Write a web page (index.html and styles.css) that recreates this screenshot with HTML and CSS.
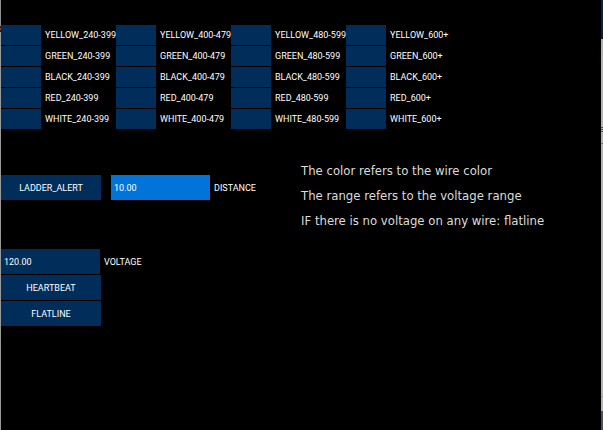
FILE: index.html
```
<!DOCTYPE html>
<html lang="en">
<head>
<meta charset="utf-8">
<title>Wire voltage</title>
<link rel="stylesheet" href="styles.css">
</head>
<body>
<main class="window">
  <section class="toggles">
    <label class="toggle"><input type="checkbox">YELLOW_240-399</label>
    <label class="toggle"><input type="checkbox">YELLOW_400-479</label>
    <label class="toggle"><input type="checkbox">YELLOW_480-599</label>
    <label class="toggle"><input type="checkbox">YELLOW_600+</label>
    <label class="toggle"><input type="checkbox">GREEN_240-399</label>
    <label class="toggle"><input type="checkbox">GREEN_400-479</label>
    <label class="toggle"><input type="checkbox">GREEN_480-599</label>
    <label class="toggle"><input type="checkbox">GREEN_600+</label>
    <label class="toggle"><input type="checkbox">BLACK_240-399</label>
    <label class="toggle"><input type="checkbox">BLACK_400-479</label>
    <label class="toggle"><input type="checkbox">BLACK_480-599</label>
    <label class="toggle"><input type="checkbox">BLACK_600+</label>
    <label class="toggle"><input type="checkbox">RED_240-399</label>
    <label class="toggle"><input type="checkbox">RED_400-479</label>
    <label class="toggle"><input type="checkbox">RED_480-599</label>
    <label class="toggle"><input type="checkbox">RED_600+</label>
    <label class="toggle"><input type="checkbox">WHITE_240-399</label>
    <label class="toggle"><input type="checkbox">WHITE_400-479</label>
    <label class="toggle"><input type="checkbox">WHITE_480-599</label>
    <label class="toggle"><input type="checkbox">WHITE_600+</label>
  </section>
  <div class="panels">
    <div class="controls">
      <section class="alert">
        <button class="action" type="button">LADDER_ALERT</button>
        <div class="field">
          <input class="value active" id="distance" type="text" value="10.00">
          <label for="distance">DISTANCE</label>
        </div>
      </section>
      <section class="signal">
        <div class="field">
          <input class="value" id="voltage" type="text" value="120.00">
          <label for="voltage">VOLTAGE</label>
        </div>
        <button class="action" type="button">HEARTBEAT</button>
        <button class="action" type="button">FLATLINE</button>
      </section>
    </div>
    <section class="notes">
      <p>The color refers to the wire color</p>
      <p>The range refers to the voltage range</p>
      <p>IF there is no voltage on any wire: flatline</p>
    </section>
  </div>
</main>
</body>
</html>
```
FILE: styles.css
```
* {
  box-sizing: border-box;
}

body {
  margin: 0;
  padding: 0 2px 0 1px;
  min-height: 100vh;
  display: flex;
  /* desktop visible on both sides of the window */
  background:
    linear-gradient(#8a8f8f 26px, #401510 26px 28px, #a83a18 28px 30px, #102028 30px 32px, #999 32px) left / 1px 100% no-repeat,
    linear-gradient(#0c2036 39px, #9db4b3 39px, #b2b2b2 60px 127px, #555 127px 128px, #b2b2b2 128px 129px, #555 129px 130px, #b2b2b2 130px 131px, #555 131px 132px, #b2b2b2 132px 143px, #777 143px 144px, #b2b2b2 144px 396px, #999 396px 397px, #b2b2b2 397px 411px, #4a545e 411px) right / 2px 100% no-repeat,
    #000;
  color: #fff;
  font-family: Roboto, "Liberation Sans", sans-serif;
  font-size: 9px;
  line-height: 12px;
}

.window {
  flex: 1;
  padding-top: 25px;
  background: #000;
}

.toggles {
  display: grid;
  grid-template-columns: repeat(4, 115px);
  row-gap: 1px;
}

.toggle {
  display: flex;
  align-items: center;
  gap: 4px;
  line-height: 14px;
  white-space: nowrap;
}

.toggle input {
  appearance: none;
  flex: none;
  width: 40px;
  height: 20px;
  margin: 0;
  background: #002d5a;
}

.toggle input:checked {
  background: #00aaff;
}

.panels {
  display: flex;
  margin-top: 46px;
}

.controls {
  flex: none;
  width: 300px;
}

.alert {
  display: flex;
  gap: 10px;
}

.signal {
  display: flex;
  flex-direction: column;
  align-items: flex-start;
  gap: 1px;
  margin-top: 49px;
}

.field {
  display: flex;
  align-items: center;
  gap: 4px;
}

.action,
.value {
  height: 25px;
  margin: 0;
  border: 0;
  border-radius: 0;
  background: #002d5a;
  color: inherit;
  font: inherit;
}

.action {
  width: 100px;
  padding: 0;
}

.value {
  width: 99px;
  padding: 0 3px;
}

.value.active {
  background: #0074d9;
}

.notes {
  display: flex;
  flex-direction: column;
  gap: 5px;
  margin-top: -14px;
  color: #dcdcdc;
  font-family: "DejaVu Sans Condensed", "DejaVu Sans", sans-serif;
  font-size: 13px;
  line-height: 20px;
}

.notes p {
  margin: 0;
}
```
